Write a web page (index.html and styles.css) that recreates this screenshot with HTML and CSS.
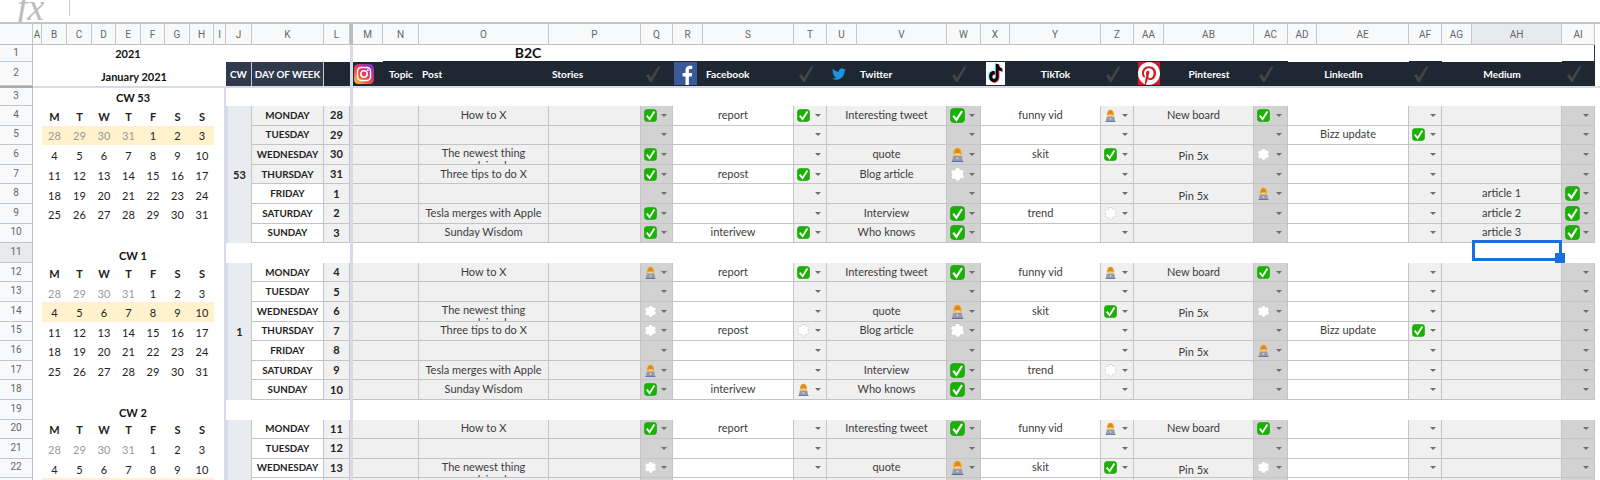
FILE: index.html
```html
<!DOCTYPE html>
<html lang="en">
<head>
<meta charset="utf-8">
<title>Content calendar</title>
<link rel="stylesheet" href="styles.css">
</head>
<body>
<svg class="defs" aria-hidden="true">
  <defs>
    <linearGradient id="ig-grad" x1="0.1" y1="1" x2="0.9" y2="0">
      <stop offset="0" stop-color="#fdc440"/>
      <stop offset="0.35" stop-color="#f0503a"/>
      <stop offset="0.65" stop-color="#d62d84"/>
      <stop offset="1" stop-color="#6b3bc4"/>
    </linearGradient>
  </defs>
  <symbol id="i-check" viewBox="0 0 14 14">
    <rect x="0.5" y="0.5" width="13" height="13" rx="3" fill="#17b300" stroke="#0f9a00" stroke-width="0.6"/>
    <path d="M3 7.2 6 11 11.2 2.8" fill="none" stroke="#fff" stroke-width="2"/>
  </symbol>
  <symbol id="i-person" viewBox="0 0 14 14">
    <path d="M3.2 7C2.8 2.6 5 .8 7 .8s4.2 1.8 3.8 6.2z" fill="#f2a41c"/>
    <path d="M5 2.6 7 1.6l2 1 .6 3H4.4z" fill="#e0861a"/>
    <path d="M4.8 6h4.4v2.4H4.8z" fill="#f6cf8e"/>
    <path d="M3 8.2h8l1 4.8H2z" fill="#9a9aa2"/>
    <circle cx="7" cy="10.6" r="0.9" fill="#dedee2"/>
    <path d="M1.6 13h10.8v.8H1.6z" fill="#3a55b0"/>
  </symbol>
  <symbol id="i-cloud" viewBox="0 0 14 14">
    <g fill="#c4c4c4">
      <circle cx="7" cy="2.9" r="2.6"/><circle cx="10.4" cy="4.7" r="2.6"/><circle cx="10.6" cy="8.6" r="2.6"/><circle cx="7.2" cy="10.8" r="2.6"/><circle cx="3.6" cy="9" r="2.6"/><circle cx="3.4" cy="5" r="2.6"/>
    </g>
    <g fill="#fff">
      <circle cx="7" cy="2.9" r="2.2"/><circle cx="10.4" cy="4.7" r="2.2"/><circle cx="10.6" cy="8.6" r="2.2"/><circle cx="7.2" cy="10.8" r="2.2"/><circle cx="3.6" cy="9" r="2.2"/><circle cx="3.4" cy="5" r="2.2"/><circle cx="7" cy="7" r="4"/>
    </g>
  </symbol>
  <symbol id="i-tick" viewBox="0 0 16 16">
    <path d="M1 9.6 3.6 8 6 11.8 13 0.4 15.6 0.4 6.6 16H5z" fill="#454545"/>
  </symbol>
  <symbol id="i-insta" viewBox="0 0 24 24">
    <rect width="24" height="24" rx="5.5" fill="url(#ig-grad)"/>
    <rect x="4.2" y="4.2" width="15.6" height="15.6" rx="4.4" fill="none" stroke="#fff" stroke-width="1.8"/>
    <circle cx="12" cy="12" r="3.8" fill="none" stroke="#fff" stroke-width="1.8"/>
    <circle cx="16.6" cy="7.4" r="1.1" fill="#fff"/>
  </symbol>
  <symbol id="i-fb" viewBox="0 0 24 24" preserveAspectRatio="none">
    <rect width="24" height="24" fill="#3b5998"/>
    <path d="M15.5 24v-9h3l.5-3.6h-3.5V9c0-1 .3-1.7 1.8-1.7H19V4.1C18.6 4 17.6 4 16.4 4 13.8 4 12 5.6 12 8.6v2.8H9V15h3v9z" fill="#fff"/>
  </symbol>
  <symbol id="i-tw" viewBox="0 0 24 24">
    <path d="M23.95 4.57a10 10 0 0 1-2.82.77 4.96 4.96 0 0 0 2.16-2.72c-.95.55-2 .95-3.12 1.18a4.92 4.92 0 0 0-8.38 4.48C7.69 8.1 4.07 6.13 1.64 3.16a4.82 4.82 0 0 0-.67 2.48c0 1.71.87 3.21 2.19 4.1a4.9 4.9 0 0 1-2.23-.62v.06a4.92 4.92 0 0 0 3.95 4.83 4.9 4.9 0 0 1-2.21.08 4.93 4.93 0 0 0 4.6 3.42A9.87 9.87 0 0 1 0 19.54a14 14 0 0 0 7.56 2.21c9.05 0 14-7.5 14-13.98 0-.21 0-.42-.02-.63a9.94 9.94 0 0 0 2.41-2.57z" fill="#1b95e0"/>
  </symbol>
  <symbol id="i-tt" viewBox="0 0 24 24" preserveAspectRatio="none">
    <rect width="24" height="24" fill="#fff"/>
    <path transform="translate(-1.2 -.6)" d="M12.5 2h3.2c.2 2.6 1.8 4.2 4.3 4.4v3.2c-1.6 0-3-.5-4.2-1.4v6.8c0 3.6-2.8 6-6 6-3.3 0-5.8-2.6-5.8-5.8 0-3.5 3-6.2 6.8-5.7v3.4c-1.8-.4-3.4.7-3.4 2.3 0 1.4 1.1 2.5 2.5 2.5s2.6-1 2.6-2.7z" fill="#25f4ee"/>
    <path transform="translate(1.2 .6)" d="M12.5 2h3.2c.2 2.6 1.8 4.2 4.3 4.4v3.2c-1.6 0-3-.5-4.2-1.4v6.8c0 3.6-2.8 6-6 6-3.3 0-5.8-2.6-5.8-5.8 0-3.5 3-6.2 6.8-5.7v3.4c-1.8-.4-3.4.7-3.4 2.3 0 1.4 1.1 2.5 2.5 2.5s2.6-1 2.6-2.7z" fill="#fe2c55"/>
    <path d="M12.5 2h3.2c.2 2.6 1.8 4.2 4.3 4.4v3.2c-1.6 0-3-.5-4.2-1.4v6.8c0 3.6-2.8 6-6 6-3.3 0-5.8-2.6-5.8-5.8 0-3.5 3-6.2 6.8-5.7v3.4c-1.8-.4-3.4.7-3.4 2.3 0 1.4 1.1 2.5 2.5 2.5s2.6-1 2.6-2.7z" fill="#000"/>
  </symbol>
  <symbol id="i-pin" viewBox="0 0 24 24" preserveAspectRatio="none">
    <rect width="24" height="24" fill="#cb1f27"/>
    <path d="M12.017 0C5.396 0 .029 5.367.029 11.987c0 5.079 3.158 9.417 7.618 11.162-.105-.949-.199-2.403.041-3.439.219-.937 1.406-5.957 1.406-5.957s-.359-.72-.359-1.781c0-1.663.967-2.911 2.168-2.911 1.024 0 1.518.769 1.518 1.688 0 1.029-.653 2.567-.992 3.992-.285 1.193.6 2.165 1.775 2.165 2.128 0 3.768-2.245 3.768-5.487 0-2.861-2.063-4.869-5.008-4.869-3.41 0-5.409 2.562-5.409 5.199 0 1.033.394 2.143.889 2.741.099.12.112.225.085.345-.09.375-.293 1.199-.334 1.363-.053.225-.172.271-.401.165-1.495-.69-2.433-2.878-2.433-4.646 0-3.776 2.748-7.252 7.92-7.252 4.158 0 7.392 2.967 7.392 6.923 0 4.135-2.607 7.462-6.233 7.462-1.214 0-2.354-.629-2.758-1.379l-.749 2.848c-.269 1.045-1.004 2.352-1.498 3.146 1.123.345 2.306.535 3.55.535 6.607 0 11.985-5.365 11.985-11.987C23.97 5.39 18.592.026 11.985.026L12.017 0z" fill="#fff"/>
  </symbol>
</svg>
<header class="toolbar">
  <span class="fx">fx</span>
  <span class="fx-sep"></span>
</header>
<main class="sheet" id="sheet"></main>
<script src="script.js"></script>
</body>
</html>
```
FILE: styles.css
```css
* { box-sizing: border-box; }
html, body { margin: 0; height: 480px; overflow: hidden; background: #fff; }
body { font-family: "Lato", "Liberation Sans", sans-serif; color: #333; font-size: 11px; }
.defs { position: absolute; width: 0; height: 0; }

.toolbar { height: 24px; display: flex; align-items: flex-start; border-bottom: 2px solid #c4c4c4; overflow: hidden; }
.fx { font: italic 38px/14px "Liberation Serif", serif; color: #bdbdbd; margin-left: 17px; width: 52px; height: 20px; }
.fx-sep { width: 1px; height: 16px; background: #c8c8c8; }

.sheet {
  display: grid;
  grid-template-columns: 33px 9px 25px 25px 24px 25px 24px 25px 24px 12px 26px 72px 26px 3px
    30px 36px 130px 92px 32px 30px 91px 33px 30px 90px 34px 29px 91px 33px 30px 90px 34px 29px 92px 33px 30px 90px 33px 5px;
  grid-template-rows: 21px 17px 24px 2px 18px;
  grid-auto-rows: 19.6px;
}
.sheet > div { min-width: 0; overflow: hidden; display: flex; align-items: center; justify-content: center; white-space: nowrap; }

.s2 { grid-column: span 2; }
.s3 { grid-column: span 3; }
.s5 { grid-column: span 5; }
.s7 { grid-column: span 7; }
.s8 { grid-column: span 8; }
.s11 { grid-column: span 11; }
.s21 { grid-column: span 21; }
.s23 { grid-column: span 23; }
.s37 { grid-column: span 37; }
.r7 { grid-row: span 7; }

.colh, .corner { background: #f8f9fa; color: #666; font: 10px "Roboto", "Liberation Sans", sans-serif; border-right: 1px solid #c6c6c6; border-bottom: 1px solid #c0c0c0; }
.colh.on { background: #e8eaed; }
.colh.frz { background: #bcbcbc; border: 0; border-bottom: 1px solid #c0c0c0; }
.rowh { background: #f8f9fa; color: #666; font: 10px "Roboto", "Liberation Sans", sans-serif; border-right: 1px solid #c0c0c0; border-bottom: 1px solid #c6c6c6; padding-bottom: 2px; }
.rowh.on { background: #e8eaed; }

.frz { background: #d5dbe8; }
.frzrow { background: #d5dbe8; }
.frzhead { background: #a9a9a9; }
.blank { background: #fff; }

.cal { font-size: 11px; color: #222; padding-top: 2px; }
.cal.hl { background: #fff2cc; padding-top: 1px; }
.cal.muted { color: #9a9a9a; }
.cal.dow { font-weight: 700; font-size: 11px; color: #222; padding-top: 1px; }
.title { font-weight: 700; color: #111; font-size: 11px; }
.sheet > .title.low { align-items: flex-end; padding-bottom: 1px; }
.sheet > .title.jan { align-items: flex-end; padding-bottom: 3px; }
.sheet > .title.top { padding-bottom: 1px; }
.calend { border-right: 2px solid #d5dbe8; }

.cw { background: #e8ebf0; border-right: 1px solid #c6c6c6; border-left: 2px solid #d5dbe8; font-weight: 700; color: #222; }
.day { font-weight: 700; font-size: 9.8px; color: #222; border-right: 1px solid #c4c4c4; border-bottom: 1px solid #c4c4c4; background: #fff; padding-bottom: 1px; }
.day.grey { background: #f1f1f1; }
.num { font-weight: 700; font-size: 11px; color: #222; background: #f1f1f1; border-right: 1px solid #c4c4c4; border-bottom: 1px solid #c4c4c4; padding-bottom: 1px; }

.c { border-right: 1px solid #c4c4c4; border-bottom: 1px solid #c4c4c4; background: #f0f0f0; color: #3c3c3c; padding-bottom: 2px; }
.c.w { background: #fff; }
.sheet > .c.wrap { white-space: pre-line; text-align: center; line-height: 13px; align-items: flex-start; padding: 1px 0 0; }
.sheet > .c.lower { padding: 3px 0 0; align-items: center; }
.st { padding: 0 5px 0 3px; background: #f0f0f0; border-right: 1px solid #c4c4c4; border-bottom: 1px solid #c4c4c4; }
.st.dk { background: #d2d2d2; }
.sheet > .st { justify-content: flex-start; }
.arrow { margin-left: auto; width: 0; height: 0; border-left: 3px solid transparent; border-right: 3px solid transparent; border-top: 3px solid #6e6e6e; }
.ic { width: 13px; height: 13px; flex: none; }
.ic.big { width: 15px; height: 15px; }

.hd { background: #1f2733; color: #fff; font-weight: 700; font-size: 10.2px; padding-bottom: 1px; }
.hd.slate { background: #2f3b4d; border-right: 1px solid #c4c9d4; font-size: 9.8px; }
.sheet > .hd.left { justify-content: flex-start; padding-left: 3px; }
.sheet > .hd.nudge { padding-right: 10px; }
.sheet > .hd.lead1 { justify-content: flex-start; padding-left: 1px; }
.sheet > .hd.lead4 { justify-content: flex-start; padding-left: 4px; }
.sheet > .hd.lead5 { justify-content: flex-start; padding-left: 5px; }
.hd svg { flex: none; }
.hd .ig { width: 20px; height: 20px; }
.hd .fb { width: 23px; height: 23px; }
.hd .tw { width: 14px; height: 14px; }
.hd .tt { width: 19px; height: 23px; }
.hd .pn { width: 22px; height: 23px; }
.hd .tk { width: 16px; height: 16px; }

.t1 { background: #fff; }
.t1.edge { border-bottom: 1px solid #1f2733; }
.t1.end { border-right: 1px solid #1e3a5f; }
.b2c { font-weight: 700; font-size: 14px; color: #111; padding-right: 30px; padding-bottom: 1px; }

.sheet > .hostsel { position: relative; overflow: visible; background: #fff; }
.sel { position: absolute; top: -3px; left: 0; right: 0; bottom: 2px; border: 3px solid #1a6fe0; }
.handle { position: absolute; right: -6px; bottom: -5px; width: 10px; height: 10px; background: #1a6fe0; }
```
FILE: script.js
```js
const sheet = document.getElementById('sheet');
const letters = ['A','B','C','D','E','F','G','H','I','J','K','L','|','M','N','O','P','Q','R','S','T','U','V','W','X','Y','Z','AA','AB','AC','AD','AE','AF','AG','AH','AI'];

function cell(cls, content, isHtml) {
  const d = document.createElement('div');
  d.className = cls;
  if (content !== undefined) {
    if (isHtml) d.innerHTML = content; else d.textContent = content;
  }
  sheet.appendChild(d);
  return d;
}
const icon = (id, cls) => '<svg class="' + (cls || 'ic') + '"><use href="#' + id + '"/></svg>';

/* column header row */
cell('corner');
letters.forEach(l => {
  if (l === '|') cell('colh frz');
  else cell('colh' + (l === 'AH' ? ' on' : ''), l);
});
cell('blank');

/* row 1 */
cell('rowh', '1');
cell('blank');
cell('title s7 top', '2021');
cell('blank');
cell('blank s3');
cell('frz');
cell('t1');
cell('t1 edge s5 b2c', 'B2C');
cell('t1 edge s11');
cell('t1 s2');
cell('t1 edge');
cell('t1 s2');
cell('t1 edge end');
cell('blank');

/* row 2 */
cell('rowh', '2');
cell('blank');
cell('title s8 jan', 'January 2021');
cell('hd slate', 'CW');
cell('hd slate', 'DAY OF WEEK');
cell('hd');
cell('frz');
const tick = () => cell('hd lead4', icon('i-tick', 'tk'), true);
cell('hd lead1', icon('i-insta', 'ig'), true);
cell('hd', 'Topic');
cell('hd left', 'Post');
cell('hd left', 'Stories');
tick();
cell('hd lead1', icon('i-fb', 'fb'), true);
cell('hd left', 'Facebook');
tick();
cell('hd lead5', icon('i-tw', 'tw'), true);
cell('hd left', 'Twitter');
tick();
cell('hd', icon('i-tt', 'tt'), true);
cell('hd', 'TikTok');
tick();
cell('hd', icon('i-pin', 'pn'), true);
cell('hd', 'Pinterest');
tick();
cell('hd s2 nudge', 'LinkedIn');
tick();
cell('hd s2', 'Medium');
tick();
cell('blank');

/* frozen row divider */
cell('frzhead');
cell('frzrow s37');

/* calendar content, row by row, from row 3 */
const dow = ['M','T','W','T','F','S','S'];
const w = (a, hl, muted) => ({ days: Array.from({ length: 7 }, (_, i) => {
  const v = a + i;
  return v > 31 ? v - 31 : v;
}), hl: hl, muted: muted || 0 });
const calendar = {
  3: { title: 'CW 53' }, 4: { dow: 1 },
  5: w(28, true, 4), 6: w(4), 7: w(11), 8: w(18), 9: w(25), 10: {},
  11: { title: 'CW 1' }, 12: { dow: 1 },
  13: w(28, false, 4), 14: w(4, true), 15: w(11), 16: w(18), 17: w(25), 18: {},
  19: { title: 'CW 2' }, 20: { dow: 1 },
  21: w(28, false, 4), 22: w(4), 23: w(11, true)
};

function calCells(n) {
  const row = calendar[n];
  cell('rowh' + (n === 11 ? ' on' : ''), String(n));
  cell('blank');
  if (row.title) { cell('title s8 calend' + (n > 3 ? ' low' : ''), row.title); return; }
  for (let i = 0; i < 7; i++) {
    if (row.dow) cell('cal dow', dow[i]);
    else if (row.days) cell('cal' + (row.hl ? ' hl' : '') + (i < row.muted ? ' muted' : ''), String(row.days[i]));
    else cell('cal');
  }
  cell('calend');
}

const NEWEST = 'The newest thing\nexplained';
const weeks = [
  { start: 4, cw: '53', rows: [
    ['MONDAY', 28, 1, 'How to X', 'c', 'report', 'c', 'Interesting tweet', 'c', 'funny vid', 'p', 'New board', 'c', '', '', '', ''],
    ['TUESDAY', 29, 1, '', '', '', '', '', '', '', '', '', '', 'Bizz update', 'c', '', ''],
    ['WEDNESDAY', 30, 1, NEWEST, 'c', '', '', 'quote', 'p', 'skit', 'c', 'Pin 5x', 'o', '', '', '', ''],
    ['THURSDAY', 31, 1, 'Three tips to do X', 'c', 'repost', 'c', 'Blog article', 'o', '', '', '', '', '', '', '', ''],
    ['FRIDAY', 1, 0, '', '', '', '', '', '', '', '', 'Pin 5x', 'p', '', '', 'article 1', 'c'],
    ['SATURDAY', 2, 0, 'Tesla merges with Apple', 'c', '', '', 'Interview', 'c', 'trend', 'o', '', '', '', '', 'article 2', 'c'],
    ['SUNDAY', 3, 0, 'Sunday Wisdom', 'c', 'interivew', 'c', 'Who knows', 'c', '', '', '', '', '', '', 'article 3', 'c']
  ]},
  { start: 12, cw: '1', rows: [
    ['MONDAY', 4, 0, 'How to X', 'p', 'report', 'c', 'Interesting tweet', 'c', 'funny vid', 'p', 'New board', 'c', '', '', '', ''],
    ['TUESDAY', 5, 0, '', '', '', '', '', '', '', '', '', '', '', '', '', ''],
    ['WEDNESDAY', 6, 0, NEWEST, 'o', '', '', 'quote', 'p', 'skit', 'c', 'Pin 5x', 'o', '', '', '', ''],
    ['THURSDAY', 7, 0, 'Three tips to do X', 'o', 'repost', 'o', 'Blog article', 'o', '', '', '', '', 'Bizz update', 'c', '', ''],
    ['FRIDAY', 8, 0, '', '', '', '', '', '', '', '', 'Pin 5x', 'p', '', '', '', ''],
    ['SATURDAY', 9, 0, 'Tesla merges with Apple', 'p', '', '', 'Interview', 'c', 'trend', 'o', '', '', '', '', '', ''],
    ['SUNDAY', 10, 0, 'Sunday Wisdom', 'c', 'interivew', 'p', 'Who knows', 'c', '', '', '', '', '', '', '', '']
  ]},
  { start: 20, cw: '2', rows: [
    ['MONDAY', 11, 0, 'How to X', 'c', 'report', '', 'Interesting tweet', 'c', 'funny vid', 'p', 'New board', 'c', '', '', '', ''],
    ['TUESDAY', 12, 0, '', '', '', '', '', '', '', '', '', '', '', '', '', ''],
    ['WEDNESDAY', 13, 0, NEWEST, 'o', '', '', 'quote', 'p', 'skit', 'c', 'Pin 5x', 'o', '', '', '', ''],
    ['THURSDAY', 14, 0, 'Three tips to do X', 'o', 'repost', 'o', 'Blog article', 'o', '', '', '', '', '', '', '', '']
  ]}
];

function status(kind, dark, big) {
  const ids = { c: 'i-check', p: 'i-person', o: 'i-cloud' };
  const ic = kind ? icon(ids[kind], 'ic' + (big ? ' big' : '')) : '';
  cell('st' + (dark ? ' dk' : ''), ic + '<span class="arrow"></span>', true);
}

function dataRow(r, first, weekCw) {
  if (first) cell('cw r7', weekCw);
  cell('day' + (r[2] ? ' grey' : ''), r[0]);
  cell('num', String(r[1]));
  cell('frz');
  cell('c s2');
  cell('c' + (r[3] === NEWEST ? ' wrap' : ''), r[3]);
  cell('c');
  status(r[4], true, false);
  cell('c w s2', r[5]);
  status(r[6], false, false);
  cell('c s2', r[7]);
  status(r[8], true, true);
  cell('c w s2', r[9]);
  status(r[10], false, false);
  cell('c s2' + (r[11] === 'Pin 5x' ? ' lower' : ''), r[11]);
  status(r[12], true, false);
  cell('c w s2', r[13]);
  status(r[14], false, false);
  cell('c s2', r[15]);
  status(r[16], true, true);
  cell('blank');
}

/* row 3 */
calCells(3);
cell('blank s3');
cell('frz');
cell('blank s23');
cell('blank');

weeks.forEach(week => {
  week.rows.forEach((r, i) => {
    const n = week.start + i;
    calCells(n);
    dataRow(r, i === 0, week.cw);
  });
  const sep = week.start + 7;
  if (calendar[sep]) {
    calCells(sep);
    cell('blank s3');
    cell('frz');
    if (sep === 11) {
      cell('blank s21');
      const host = cell('hostsel');
      host.innerHTML = '<span class="sel"><span class="handle"></span></span>';
      cell('blank');
    } else {
      cell('blank s23');
    }
    cell('blank');
  }
});
```
